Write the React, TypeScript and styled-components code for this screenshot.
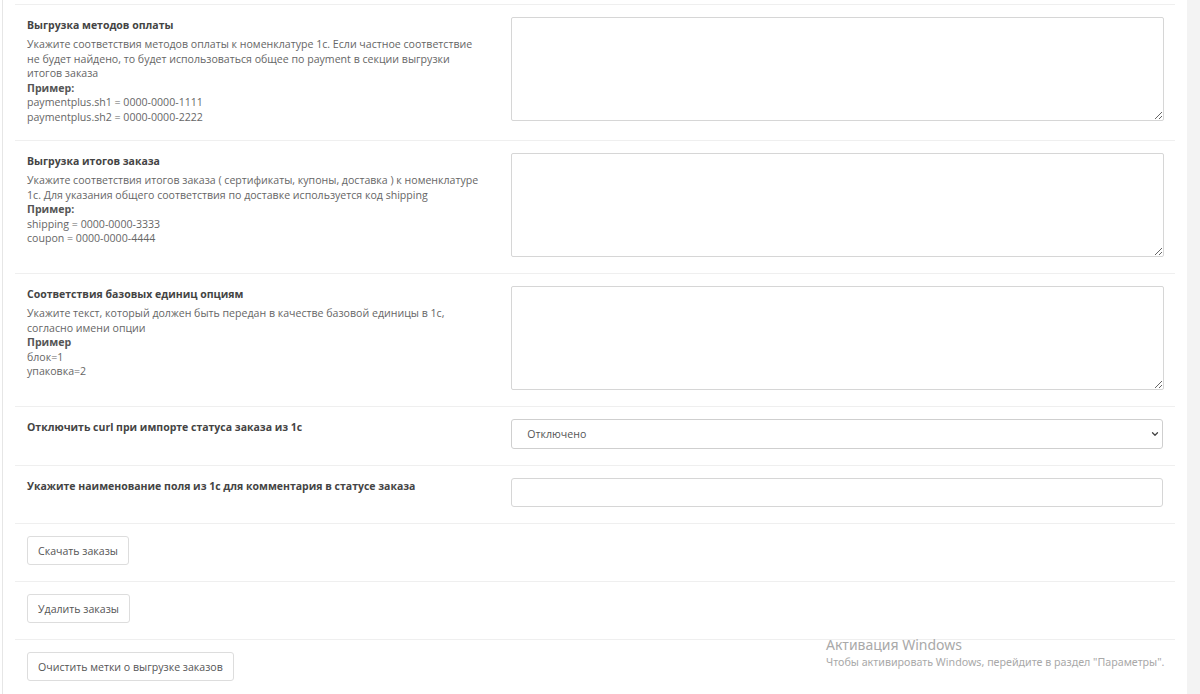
import { createGlobalStyle } from 'styled-components'
import styled from 'styled-components'
import { ChevronDown } from 'lucide-react'

const GlobalStyle = createGlobalStyle`
  html, body {
    margin: 0;
    padding: 0;
    background: #ffffff;
  }

  body {
    font-family: 'Open Sans', 'Noto Sans', sans-serif;
    font-size: 10.6px;
    color: #666666;
  }
`

type TextField = {
  title: string
  lines: string[]
  exampleLabel: string
  examples: string[]
}

const textFields: TextField[] = [
  {
    title: 'Выгрузка методов оплаты',
    lines: [
      'Укажите соответствия методов оплаты к номенклатуре 1с. Если частное соответствие не будет найдено, то будет использоваться общее по payment в секции выгрузки итогов заказа',
    ],
    exampleLabel: 'Пример:',
    examples: ['paymentplus.sh1 = 0000-0000-1111', 'paymentplus.sh2 = 0000-0000-2222'],
  },
  {
    title: 'Выгрузка итогов заказа',
    lines: [
      'Укажите соответствия итогов заказа ( сертификаты, купоны, доставка ) к номенклатуре 1с. Для указания общего соответствия по доставке используется код shipping',
    ],
    exampleLabel: 'Пример:',
    examples: ['shipping = 0000-0000-3333', 'coupon = 0000-0000-4444'],
  },
  {
    title: 'Соответствия базовых единиц опциям',
    lines: ['Укажите текст, который должен быть передан в качестве базовой единицы в 1с, согласно имени опции'],
    exampleLabel: 'Пример',
    examples: ['блок=1', 'упаковка=2'],
  },
]

const actions = ['Скачать заказы', 'Удалить заказы', 'Очистить метки о выгрузке заказов']

export default function App() {
  return (
    <>
      <GlobalStyle />
      <Page>
        <Panel>
          <List>
            {textFields.map((field) => (
              <Row key={field.title}>
                <LabelCol>
                  <Title>{field.title}</Title>
                  <Hint>
                    {field.lines.map((line) => (
                      <p key={line}>{line}</p>
                    ))}
                    <strong>{field.exampleLabel}</strong>
                    {field.examples.map((ex) => (
                      <p key={ex}>{ex}</p>
                    ))}
                  </Hint>
                </LabelCol>
                <ControlCol>
                  <TextArea />
                </ControlCol>
              </Row>
            ))}

            <Row>
              <LabelCol>
                <Title>Отключить curl при импорте статуса заказа из 1с</Title>
              </LabelCol>
              <ControlCol>
                <SelectWrap>
                  <Select defaultValue="0">
                    <option value="0">Отключено</option>
                    <option value="1">Включено</option>
                  </Select>
                  <Chevron>
                    <ChevronDown size={10} strokeWidth={3} />
                  </Chevron>
                </SelectWrap>
              </ControlCol>
            </Row>

            <Row>
              <LabelCol>
                <Title>Укажите наименование поля из 1с для комментария в статусе заказа</Title>
              </LabelCol>
              <ControlCol>
                <Input type="text" />
              </ControlCol>
            </Row>

            {actions.map((label) => (
              <Row key={label}>
                <ButtonCol>
                  <Button type="button">{label}</Button>
                </ButtonCol>
              </Row>
            ))}
          </List>
        </Panel>
        <Gutter />
      </Page>
      <Activation>
        <div className="head">Активация Windows</div>
        <div className="sub">Чтобы активировать Windows, перейдите в раздел "Параметры".</div>
      </Activation>
    </>
  )
}

const Page = styled.div`
  display: flex;
  min-height: 694px;
  padding-left: 2px;
  overflow: hidden;
`

const Panel = styled.div`
  flex: 1;
  border-left: 1px solid #e6e6e6;
  padding: 4px 12px 0 12px;
  background: #ffffff;
`

const Gutter = styled.div`
  width: 13px;
  background: #f3f3f3;
`

const List = styled.div`
  display: flex;
  flex-direction: column;
`

const Row = styled.div`
  display: grid;
  grid-template-columns: 5fr 7fr;
  border-top: 1px solid #efefef;
  padding: 12px 0 16px;
`

const LabelCol = styled.div`
  padding: 1px 12px 0;
`

const ControlCol = styled.div`
  padding: 0 12px;
`

const ButtonCol = styled.div`
  grid-column: 1 / -1;
  padding: 0 12px;
`

const Title = styled.div`
  font-weight: 700;
  font-size: 10.5px;
  line-height: 15px;
  color: #444444;
  margin-bottom: 4px;
`

const Hint = styled.div`
  font-size: 10.6px;
  line-height: 14.5px;
  color: #666666;

  p {
    margin: 0;
  }

  strong {
    display: block;
    font-weight: 700;
    color: #555555;
  }
`

const TextArea = styled.textarea`
  display: block;
  box-sizing: border-box;
  width: 100%;
  height: 104px;
  margin: 0 0 0 1px;
  border: 1px solid #d6d6d6;
  border-radius: 2px;
  background: #ffffff;
  font-family: 'Open Sans', sans-serif;
  font-size: 11px;
  resize: vertical;
  outline: none;
`

const SelectWrap = styled.div`
  position: relative;
  margin-left: 1px;
`

const Select = styled.select`
  display: block;
  box-sizing: border-box;
  width: 100%;
  height: 30px;
  padding: 0 28px 0 15px;
  border: 1px solid #cfcfcf;
  border-radius: 3px;
  background: #ffffff;
  font-family: 'Open Sans', sans-serif;
  font-size: 10.6px;
  color: #555555;
  appearance: none;
  outline: none;
`

const Chevron = styled.span`
  position: absolute;
  right: 3px;
  top: 10px;
  display: flex;
  color: #444444;
  pointer-events: none;
`

const Input = styled.input`
  display: block;
  box-sizing: border-box;
  width: calc(100% - 1px);
  height: 29px;
  margin-left: 1px;
  padding: 0 12px;
  border: 1px solid #d6d6d6;
  border-radius: 3px;
  background: #ffffff;
  font-family: 'Open Sans', sans-serif;
  font-size: 10.6px;
  outline: none;
`

const Button = styled.button`
  height: 29px;
  padding: 0 10px;
  border: 1px solid #dddddd;
  border-radius: 3px;
  background: #ffffff;
  font-family: 'Open Sans', sans-serif;
  font-size: 10.6px;
  color: #555555;
  cursor: pointer;
`

const Activation = styled.div`
  position: absolute;
  left: 826px;
  top: 636px;
  font-family: 'Noto Sans', 'Open Sans', sans-serif;
  color: #a9a9a9;
  pointer-events: none;

  .head {
    font-size: 14px;
    line-height: 18px;
  }

  .sub {
    font-size: 10.7px;
    line-height: 16px;
  }
`
